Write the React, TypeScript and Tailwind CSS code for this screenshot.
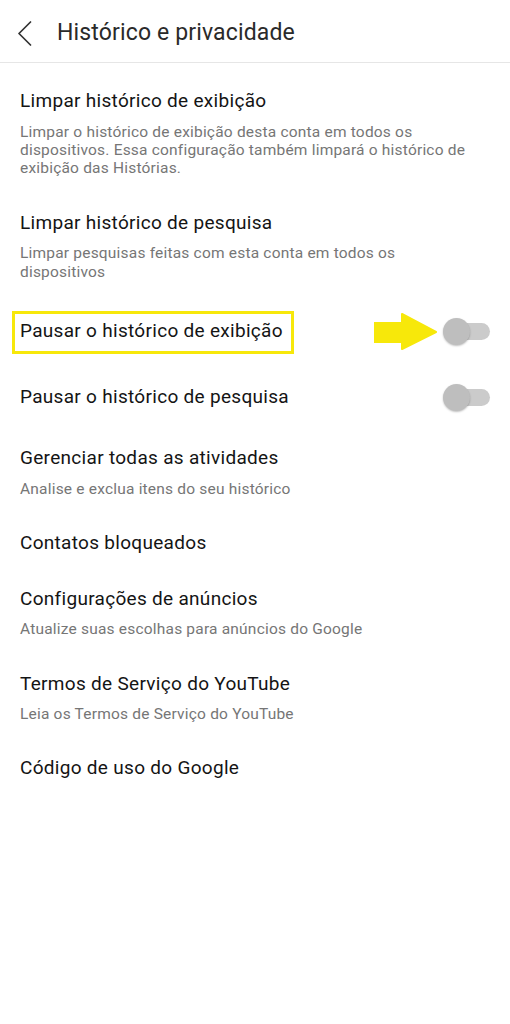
import React from "react";

function Toggle() {
  return (
    <div className="flex items-center h-[24px]">
      <div className="relative w-[47px] h-[27px] shrink-0">
        <div className="absolute right-0 top-[5px] w-[42px] h-[17px] rounded-full bg-[#cbcbcb]" />
        <div className="absolute left-0 top-0 w-[27px] h-[27px] rounded-full bg-[#bebebe] shadow-[0_1px_2px_rgba(0,0,0,0.25)]" />
      </div>
    </div>
  );
}

function Arrow() {
  return (
    <svg width="63" height="37" viewBox="0 0 63 37" className="shrink-0">
      <rect x="0" y="9" width="30" height="21" fill="#f7e80a" />
      <polygon points="28,1 62,19 28,36" fill="#f7e80a" stroke="#f7e80a" strokeWidth="2" strokeLinejoin="round" />
    </svg>
  );
}

export default function App() {
  const title = "text-[19px] leading-[24px] tracking-[0.3px] text-[#141414]";
  const sub = "text-[15.5px] leading-[18px] tracking-[0.2px] text-[#767676] pr-[10px]";
  return (
    <div className="w-[510px] h-[1024px] bg-white" style={{ fontFamily: "Roboto, 'Noto Sans', sans-serif" }}>
      <header className="h-[63px] flex items-center pl-[17px] pt-[4px] border-b border-[#e6e6e6]">
        <svg width="15" height="25" viewBox="0 0 15 25" className="shrink-0">
          <polyline points="13.5,1 2,12.5 13.5,24" fill="none" stroke="#333333" strokeWidth="1.7" strokeLinecap="round" strokeLinejoin="round" />
        </svg>
        <h1 className="ml-[25px] text-[23px] leading-[28px] tracking-[0.15px] text-[#2a2a2a]">Histórico e privacidade</h1>
      </header>

      <div className="flex flex-col">
        <div className="px-5 pt-[26px] pb-[17px]">
          <div className={title}>Limpar histórico de exibição</div>
          <div className={`${sub} mt-[10px]`}>
            Limpar o histórico de exibição desta conta em todos os dispositivos. Essa configuração também limpará o histórico de exibição das Histórias.
          </div>
        </div>

        <div className="px-5 pt-[17px] pb-[17px]">
          <div className={title}>Limpar histórico de pesquisa</div>
          <div className={`${sub} mt-[9px] leading-[19px]`}>
            Limpar pesquisas feitas com esta conta em todos os dispositivos
          </div>
        </div>

        <div className="px-5 pt-[20px] pb-[20px] flex items-center justify-between">
          <div className="relative">
            <span className={title}>Pausar o histórico de exibição</span>
            <span className="absolute left-[-8px] top-[-8px] bottom-[-10px] right-[-11px] border-[3px] border-[#f7e80a]" />
          </div>
          <div className="flex items-center gap-[6px] h-[24px]">
            <Arrow />
            <Toggle />
          </div>
        </div>

        <div className="px-5 pt-[21px] pb-[18px] flex items-center justify-between">
          <span className={title}>Pausar o histórico de pesquisa</span>
          <Toggle />
        </div>

        <div className="px-5 pt-[19px] pb-[16px]">
          <div className={title}>Gerenciar todas as atividades</div>
          <div className={`${sub} mt-[10px]`}>Analise e exclua itens do seu histórico</div>
        </div>

        <div className="px-5 pt-[17px] pb-[16px]">
          <div className={title}>Contatos bloqueados</div>
        </div>

        <div className="px-5 pt-[16px] pb-[17px]">
          <div className={title}>Configurações de anúncios</div>
          <div className={`${sub} mt-[9px]`}>Atualize suas escolhas para anúncios do Google</div>
        </div>

        <div className="px-5 pt-[17px] pb-[16px]">
          <div className={title}>Termos de Serviço do YouTube</div>
          <div className={`${sub} mt-[9px]`}>Leia os Termos de Serviço do YouTube</div>
        </div>

        <div className="px-5 pt-[17px] pb-[16px]">
          <div className={title}>Código de uso do Google</div>
        </div>
      </div>
    </div>
  );
}
